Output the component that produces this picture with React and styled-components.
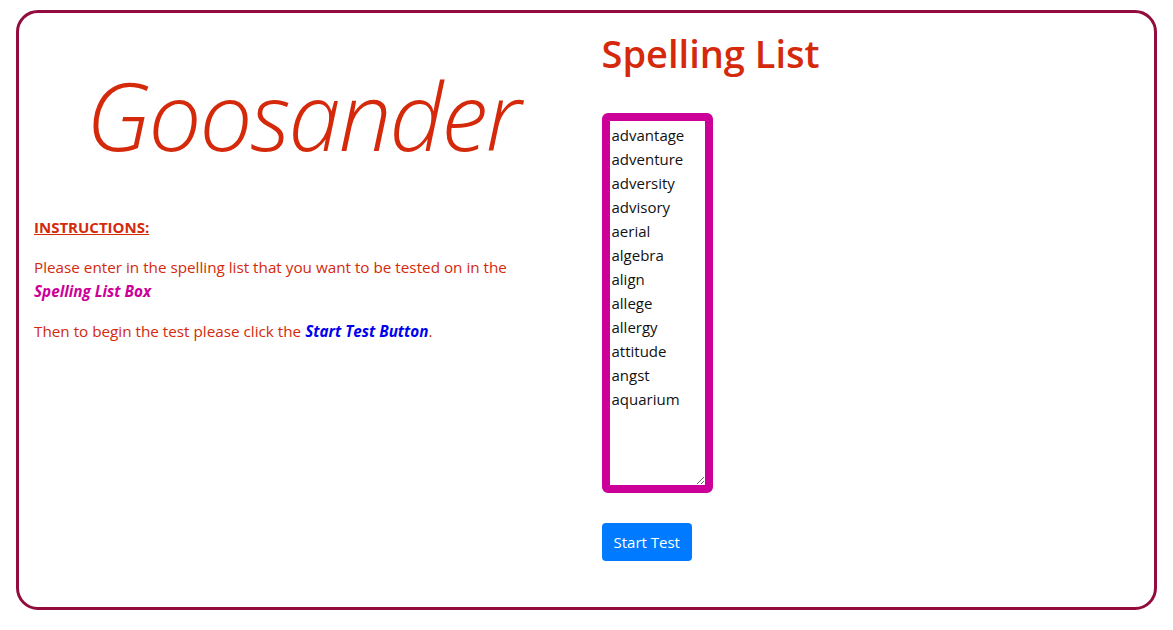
import React from "react";
import styled, { createGlobalStyle } from "styled-components";

const GlobalStyle = createGlobalStyle`
  body {
    margin: 0;
    background: #ffffff;
    font-family: "Open Sans", "Noto Sans", sans-serif;
  }
`;

const words = [
  "advantage",
  "adventure",
  "adversity",
  "advisory",
  "aerial",
  "algebra",
  "align",
  "allege",
  "allergy",
  "attitude",
  "angst",
  "aquarium",
];

const Page = styled.div`
  padding: 10px 16px 20px 16px;
`;

const Frame = styled.div`
  border: 3px solid #920c3e;
  border-radius: 22px;
  display: grid;
  grid-template-columns: 1fr 1fr;
  height: 600px;
  box-sizing: border-box;
`;

const Column = styled.div`
  padding: 0 15px;
`;

const Logo = styled.div`
  font-family: "Open Sans", sans-serif;
  font-style: italic;
  font-weight: 300;
  font-size: 94px;
  line-height: 1;
  color: #d4290b;
  text-align: center;
  letter-spacing: -2px;
  margin-top: 55px;
  margin-bottom: 55px;
`;

const Heading = styled.div`
  color: #d4290b;
  font-size: 15px;
  font-weight: 700;
  text-decoration: underline;
  margin-bottom: 18px;
`;

const Para = styled.p`
  color: #d4290b;
  font-size: 15.25px;
  line-height: 24px;
  margin: 0 0 16px 0;
`;

const Emph = styled.em`
  font-weight: 700;
  white-space: nowrap;
  color: ${(p) => p.$color};
`;

const Title = styled.h1`
  color: #d4290b;
  font-size: 38px;
  font-weight: 600;
  line-height: 48px;
  margin: 16px 0 36px 0;
`;

const ListBox = styled.textarea`
  display: block;
  width: 111px;
  height: 380px;
  box-sizing: border-box;
  border: 8px solid #cc0099;
  border-radius: 6px;
  padding: 2px 2px;
  font-family: "Open Sans", sans-serif;
  font-size: 15px;
  line-height: 24px;
  color: #111;
  resize: vertical;
  outline: none;
  overflow: hidden;
  margin-bottom: 30px;
`;

const StartButton = styled.button`
  background: #007bff;
  color: #ffffff;
  border: none;
  border-radius: 4px;
  font-family: "Open Sans", sans-serif;
  font-size: 15px;
  line-height: 24px;
  padding: 7px 12px;
  cursor: pointer;
`;

export default function App() {
  return (
    <Page>
      <GlobalStyle />
      <Frame>
        <Column>
          <Logo>Goosander</Logo>
          <Heading>INSTRUCTIONS:</Heading>
          <Para>
            Please enter in the spelling list that you want to be tested on in the{" "}
            <Emph $color="#cc0099">Spelling List Box</Emph>
          </Para>
          <Para>
            Then to begin the test please click the{" "}
            <Emph $color="#0000ee">Start Test Button</Emph>.
          </Para>
        </Column>
        <Column>
          <Title>Spelling List</Title>
          <ListBox defaultValue={words.join("\n")} />
          <StartButton>Start Test</StartButton>
        </Column>
      </Frame>
    </Page>
  );
}
